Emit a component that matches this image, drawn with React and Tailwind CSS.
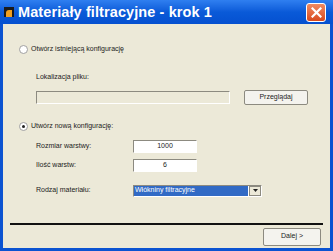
import React from "react";

function Radio({ checked }) {
  return (
    <span className="relative w-[9px] h-[9px] rounded-full bg-white border border-[#a0a0a0] flex items-center justify-center shrink-0">
      {checked && <span className="w-[3px] h-[3px] rounded-full bg-[#222]" />}
    </span>
  );
}

function Sunken({ className = "", children }) {
  return (
    <div className={"border-t border-l border-[#8c8a80] border-b border-r border-b-white border-r-white " + className}>
      {children}
    </div>
  );
}

export default function App() {
  return (
    <div className="w-[333px] h-[251px] flex flex-col bg-[#0b53d1] font-['Liberation_Sans',Arial,sans-serif] overflow-hidden">
      {/* pasek tytulu */}
      <div className="h-[24px] flex items-center px-[4px] bg-gradient-to-b from-[#2f7ff0] via-[#0a5ad8] to-[#0550d0] shrink-0">
        <span className="w-[10px] h-[10px] bg-[#1a1a1a] flex items-end justify-center shrink-0">
          <span className="w-[6px] h-[7px] bg-[#f0a020] rounded-tl-[3px]" />
        </span>
        <span className="ml-[4px] text-white font-bold text-[14.5px] leading-none tracking-[0.1px]">
          Materiały filtracyjne - krok 1
        </span>
        <span className="ml-auto mr-[3px] w-[20px] h-[19px] rounded-[3px] bg-gradient-to-b from-[#f08a60] to-[#d8481a] border border-white flex items-center justify-center">
          <svg width="11" height="11" viewBox="0 0 11 11">
            <path d="M1.5 1.5L9.5 9.5M9.5 1.5L1.5 9.5" stroke="white" strokeWidth="2.2" strokeLinecap="square" />
          </svg>
        </span>
      </div>

      {/* tresc okna */}
      <div className="flex-1 mx-[3px] mb-[3px] bg-[#ece9d8] text-[7px] text-[#222] flex flex-col">
        <div className="mt-[20px] ml-[16px] flex items-center gap-[3px]">
          <Radio />
          <span>Otwórz istniejącą konfigurację</span>
        </div>
        <div className="mt-[17px] ml-[33px]">Lokalizacja pliku:</div>
        <div className="mt-[8px] ml-[33px] flex items-center">
          <Sunken className="w-[194px] h-[13px] bg-[#ece9d8]" />
          <button className="ml-[14px] w-[64px] h-[15px] bg-[#f4f3ee] border border-[#8c8a80] rounded-[2px] text-[7px] text-[#222]">
            Przeglądaj
          </button>
        </div>

        <div className="mt-[16px] ml-[16px] flex items-center gap-[3px]">
          <Radio checked />
          <span>Utwórz nową konfigurację:</span>
        </div>

        <div className="mt-[8px] ml-[33px] flex items-center">
          <span className="w-[97px]">Rozmiar warstwy:</span>
          <Sunken className="w-[64px] h-[13px] bg-white flex items-center justify-center">1000</Sunken>
        </div>
        <div className="mt-[6px] ml-[33px] flex items-center">
          <span className="w-[97px]">Ilość warstw:</span>
          <Sunken className="w-[64px] h-[13px] bg-white flex items-center justify-center">6</Sunken>
        </div>
        <div className="mt-[13px] ml-[33px] flex items-center">
          <span className="w-[97px]">Rodzaj materiału:</span>
          <Sunken className="w-[129px] h-[12px] bg-white flex items-center">
            <span className="flex-1 h-full bg-[#316ac5] text-white flex items-center pl-[1px] mr-[1px]">Włókniny filtracyjne</span>
            <span className="w-[12px] h-[10px] bg-[#ece9d8] border border-[#8c8a80] flex items-center justify-center">
              <svg width="5" height="3" viewBox="0 0 5 3"><path d="M0 0H5L2.5 3Z" fill="#222" /></svg>
            </span>
          </Sunken>
        </div>

        <div className="mt-[26px] mx-[7px] h-[2px] bg-[#111]" />
        <div className="mt-[3px] flex justify-end mr-[9px]">
          <button className="w-[58px] h-[18px] bg-[#f4f3ee] border border-[#8c8a80] rounded-[2px] text-[7px] text-[#222]">
            Dalej &gt;
          </button>
        </div>
      </div>
    </div>
  );
}
